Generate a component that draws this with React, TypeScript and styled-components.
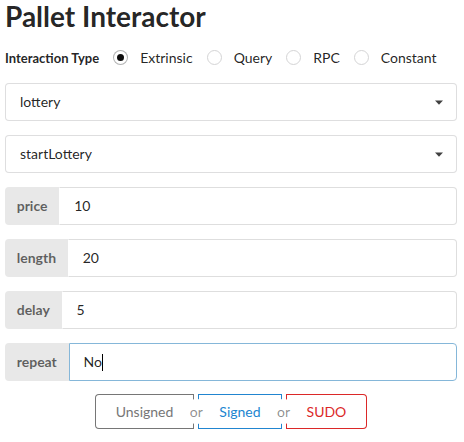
import React from "react";
import styled, { createGlobalStyle, css } from "styled-components";

const GlobalStyle = createGlobalStyle`
  html, body { margin: 0; padding: 0; background: #fff; }
  body {
    font-family: Lato, "Helvetica Neue", Arial, sans-serif;
    font-size: 14px;
    line-height: 1.4285em;
    color: rgba(0, 0, 0, 0.87);
  }
  * { box-sizing: border-box; }
`;

const Page = styled.div`
  width: 457px;
  padding: 0 0 0 5px;
`;

const Title = styled.h1`
  margin: 0 0 14px;
  font-size: 28px;
  line-height: 32px;
  font-weight: 700;
  color: rgba(0, 0, 0, 0.87);
`;

const RadioRow = styled.div`
  display: flex;
  align-items: center;
  height: 23px;
  margin-bottom: 14px;
`;

const RowLabel = styled.label`
  font-size: 13px;
  font-weight: 700;
  margin-right: 14px;
`;

const RadioItem = styled.div`
  display: flex;
  align-items: center;
  margin-right: 14px;
  font-size: 14px;
`;

const RadioCircle = styled.span<{ $checked?: boolean }>`
  position: relative;
  width: 15px;
  height: 15px;
  border-radius: 50%;
  border: 1px solid #d4d4d5;
  background: #fff;
  margin-right: 12px;
  flex: none;
  ${(p) =>
    p.$checked &&
    css`
      border-color: rgba(34, 36, 38, 0.35);
      &::after {
        content: "";
        position: absolute;
        left: 3px;
        top: 3px;
        width: 7px;
        height: 7px;
        border-radius: 50%;
        background: rgba(0, 0, 0, 0.95);
      }
    `}
`;

const Field = styled.div<{ $last?: boolean }>`
  margin-bottom: ${(p) => (p.$last ? "13px" : "14px")};
`;

const Dropdown = styled.div`
  display: flex;
  align-items: center;
  justify-content: space-between;
  height: 38px;
  padding: 0 13px 0 14px;
  border: 1px solid rgba(34, 36, 38, 0.15);
  border-radius: 4px;
  background: #fff;
  font-size: 14px;
  color: rgba(0, 0, 0, 0.87);
`;

const Caret = styled.svg`
  width: 8px;
  height: 5px;
  flex: none;
`;

const Labeled = styled.div`
  display: flex;
  height: 38px;
`;

const InputLabel = styled.div`
  display: flex;
  align-items: center;
  padding: 0 11.7px;
  background: #e8e8e8;
  color: rgba(0, 0, 0, 0.6);
  font-weight: 700;
  font-size: 14px;
  border-radius: 4px 0 0 4px;
`;

const InputBox = styled.div<{ $focused?: boolean }>`
  flex: 1;
  display: flex;
  align-items: center;
  padding: 0 14px;
  border: 1px solid rgba(34, 36, 38, 0.15);
  border-left-color: transparent;
  border-radius: 0 4px 4px 0;
  background: #fff;
  font-size: 14px;
  color: rgba(0, 0, 0, 0.87);
  ${(p) =>
    p.$focused &&
    css`
      border-color: #85b7d9;
      border-left-color: #85b7d9;
    `}
`;

const TextCaret = styled.span`
  display: inline-block;
  width: 1px;
  height: 17px;
  background: #000;
`;

const ButtonsWrap = styled.div`
  display: flex;
  justify-content: center;
`;

const Buttons = styled.div`
  display: inline-flex;
`;

const colors = {
  grey: "#767676",
  blue: "#2185d0",
  red: "#db2828",
};

const Btn = styled.button<{ $color: keyof typeof colors; $first?: boolean; $last?: boolean }>`
  height: 35px;
  padding: 0 21px;
  border: none;
  margin: 0;
  background: #fff;
  font-family: Lato, "Helvetica Neue", Arial, sans-serif;
  font-size: 14px;
  font-weight: 400;
  line-height: 1;
  color: ${(p) => colors[p.$color]};
  box-shadow: 0 0 0 1px ${(p) => colors[p.$color]} inset;
  border-radius: ${(p) => (p.$first ? "4px 0 0 4px" : p.$last ? "0 4px 4px 0" : "0")};
`;

const Or = styled.div`
  position: relative;
  width: 4px;
  z-index: 3;
  &::before {
    content: "or";
    position: absolute;
    top: 50%;
    left: 50%;
    width: 25px;
    height: 25px;
    margin: -12.5px 0 0 -12.5px;
    border-radius: 50%;
    background: #fff;
    text-align: center;
    line-height: 25px;
    font-size: 14px;
    font-weight: 400;
    color: rgba(0, 0, 0, 0.45);
  }
`;

const params = [
  { name: "price", value: "10" },
  { name: "length", value: "20" },
  { name: "delay", value: "5" },
];

export default function App() {
  return (
    <>
      <GlobalStyle />
      <Page>
        <Title>Pallet Interactor</Title>
        <RadioRow>
          <RowLabel>Interaction Type</RowLabel>
          {["Extrinsic", "Query", "RPC", "Constant"].map((t, i) => (
            <RadioItem key={t}>
              <RadioCircle $checked={i === 0} />
              {t}
            </RadioItem>
          ))}
        </RadioRow>
        {["lottery", "startLottery"].map((v) => (
          <Field key={v}>
            <Dropdown>
              {v}
              <Caret viewBox="0 0 8 5">
                <path d="M0 0.5 H8 L4 4.8 Z" fill="rgba(0,0,0,0.75)" />
              </Caret>
            </Dropdown>
          </Field>
        ))}
        {params.map((p) => (
          <Field key={p.name}>
            <Labeled>
              <InputLabel>{p.name}</InputLabel>
              <InputBox>{p.value}</InputBox>
            </Labeled>
          </Field>
        ))}
        <Field $last>
          <Labeled>
            <InputLabel>repeat</InputLabel>
            <InputBox $focused>
              No
              <TextCaret />
            </InputBox>
          </Labeled>
        </Field>
        <ButtonsWrap>
          <Buttons>
            <Btn $color="grey" $first>Unsigned</Btn>
            <Or />
            <Btn $color="blue">Signed</Btn>
            <Or />
            <Btn $color="red" $last>SUDO</Btn>
          </Buttons>
        </ButtonsWrap>
      </Page>
    </>
  );
}
